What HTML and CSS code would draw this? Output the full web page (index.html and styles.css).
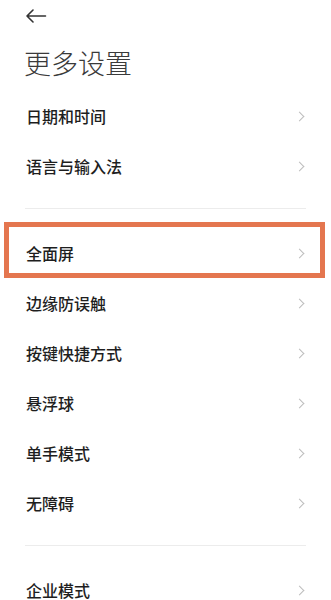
FILE: index.html
```html
<!DOCTYPE html>
<html lang="zh-CN">
<head>
    <meta charset="UTF-8">
    <meta name="viewport" content="width=device-width, initial-scale=1.0">
    <title>更多设置</title>
    <link rel="stylesheet" href="styles.css">
</head>
<body>

<div class="page">
    <div class="top-bar">
        <svg class="back" width="22" height="14" viewBox="0 0 22 14">
            <path d="M20.5 7H2 M8 1 L2 7 L8 13" fill="none" stroke="#333" stroke-width="1.6" stroke-linecap="round" stroke-linejoin="round"/>
        </svg>
    </div>
    <h1 class="title">更多设置</h1>

    <div class="group">
        <div class="row"><span>日期和时间</span><i class="chev"></i></div>
        <div class="row"><span>语言与输入法</span><i class="chev"></i></div>
    </div>
    <div class="divider"></div>
    <div class="group">
        <div class="row highlight"><span>全面屏</span><i class="chev"></i></div>
        <div class="row"><span>边缘防误触</span><i class="chev"></i></div>
        <div class="row"><span>按键快捷方式</span><i class="chev"></i></div>
        <div class="row"><span>悬浮球</span><i class="chev"></i></div>
        <div class="row"><span>单手模式</span><i class="chev"></i></div>
        <div class="row"><span>无障碍</span><i class="chev"></i></div>
    </div>
    <div class="divider"></div>
    <div class="group">
        <div class="row last"><span>企业模式</span><i class="chev"></i></div>
    </div>
</div>

</body>
</html>
```

FILE: styles.css
```css
body, html {
    margin: 0;
    padding: 0;
    height: 100%;
    overflow: hidden;
    background: #fff;
}
.page {
    font-family: "Noto Sans CJK SC", "Noto Sans", sans-serif;
    color: #1e1e1e;
}
.top-bar {
    height: 30px;
    padding-left: 25px;
    box-sizing: border-box;
    padding-top: 9px;
}
.back {
    display: block;
}
.title {
    margin: 13px 0 8px;
    padding-left: 24px;
    font-size: 27px;
    line-height: 40px;
    font-weight: 300;
    color: #3a3a3a;
}
.row {
    position: relative;
    height: 50px;
    display: flex;
    align-items: center;
    justify-content: space-between;
    padding: 0 26px 0 26px;
    font-size: 16px;
    font-weight: 500;
    line-height: 20px;
}
.chev {
    width: 6px;
    height: 6px;
    border-right: 1.3px solid #bdbdbd;
    border-top: 1.3px solid #bdbdbd;
    transform: rotate(45deg);
    margin-right: 2px;
}
.highlight::after {
    content: "";
    position: absolute;
    top: -6px;
    left: 4px;
    right: 6px;
    bottom: 0;
    border: 5px solid #e4764f;
}
.divider {
    height: 1px;
    background: #ececec;
    margin: 17px 25px 19px;
}
```
